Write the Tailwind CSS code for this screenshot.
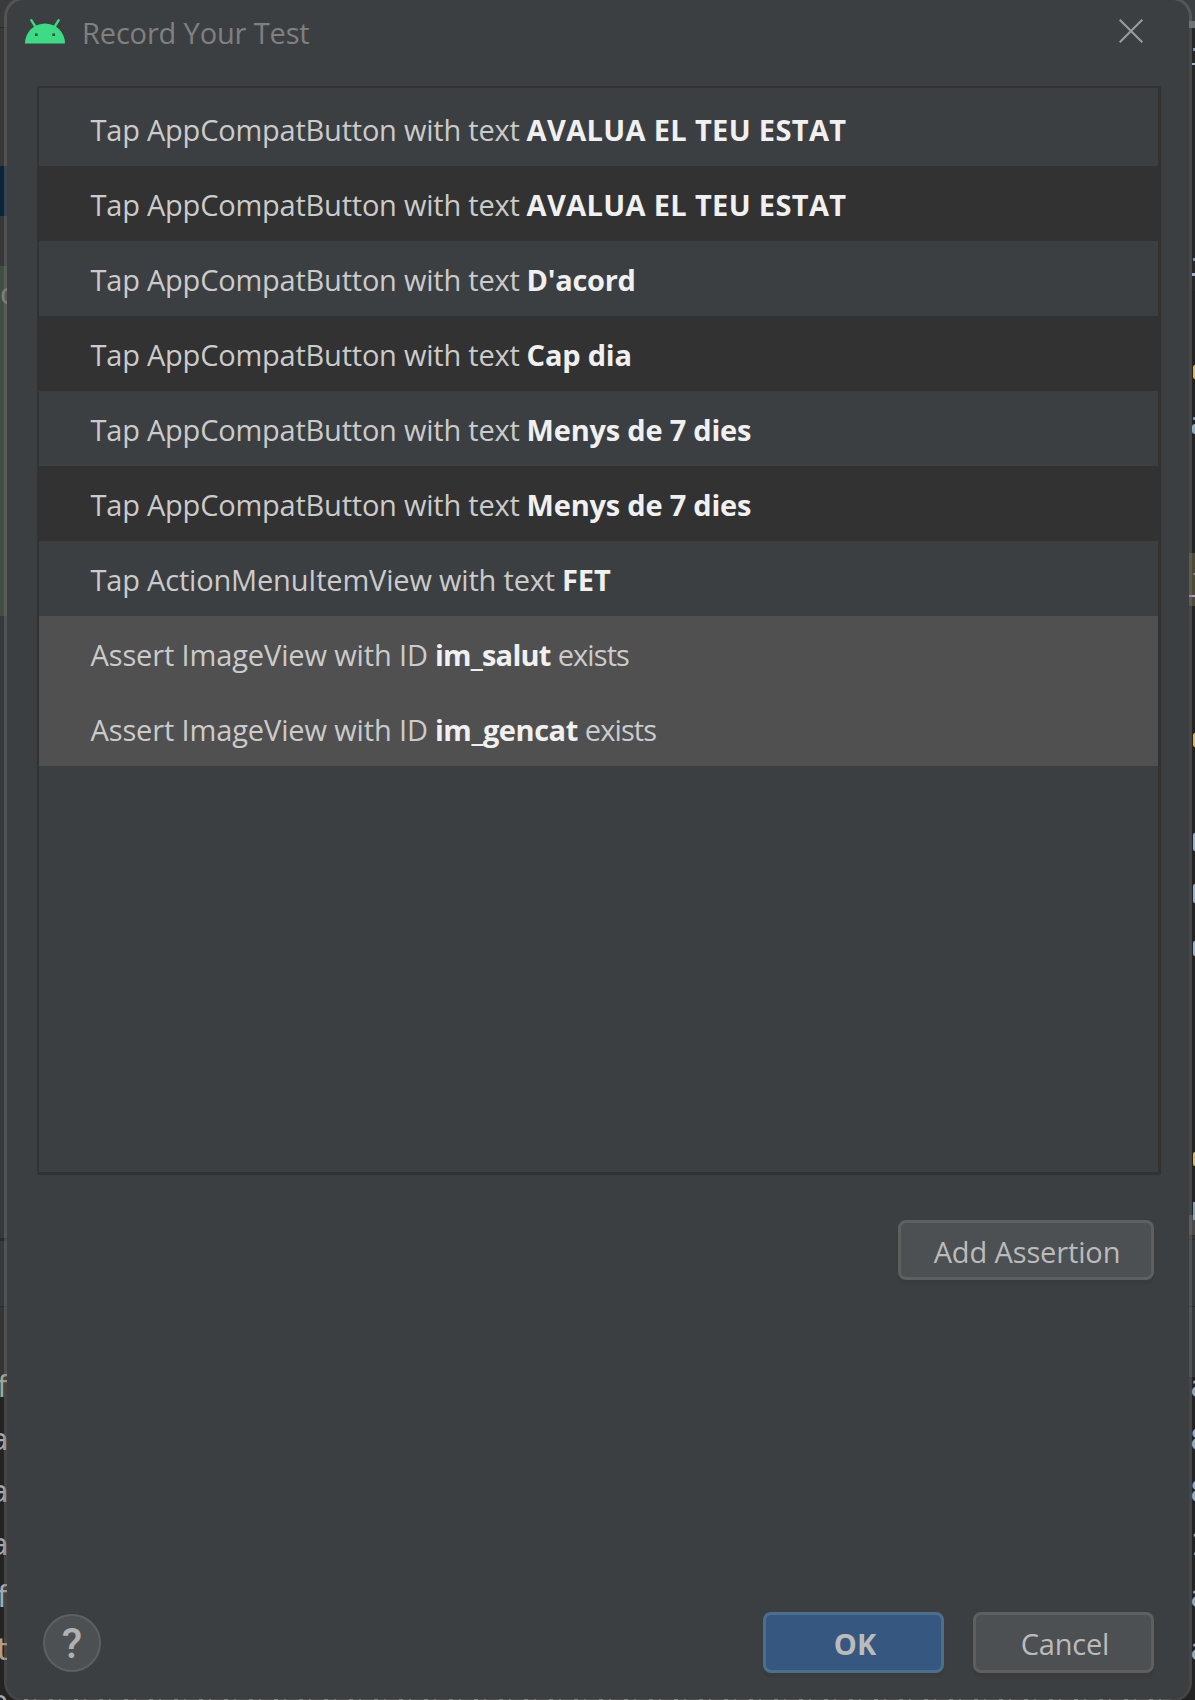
<!DOCTYPE html>
<html lang="en">
<head>
<meta charset="utf-8">
<title>Record Your Test</title>
<script src="https://cdn.jsdelivr.net/npm/@tailwindcss/browser@4"></script>
</head>
<body class="bg-[#232323]">
<div class="relative h-[1700px] w-[1195px] overflow-hidden font-['Open_Sans',sans-serif] text-[29px] leading-[40px]">

  <!-- IDE window behind the dialog -->
  <div class="absolute inset-0 flex justify-between bg-[#232323] font-['DejaVu_Sans_Mono',monospace] text-[31px] leading-[52.5px]" aria-hidden="true">
    <div class="flex w-[30px] flex-col [&>*]:shrink-0">
      <div class="h-7 border-b border-[#292929] bg-[#393b3c]"></div>
      <div class="h-[138px] bg-[#373839]"></div>
      <div class="h-[50px] bg-[#0b2438]"></div>
      <div class="h-[50px] bg-[#373839]"></div>
      <div class="h-[350px] bg-[#434d42] pt-px"><div class="text-[29px] font-['Open_Sans',sans-serif] text-[#808080]">c</div></div>
      <div class="h-[622px] bg-[#36393b]"></div>
      <div class="h-[3px] bg-[#2a2a2a]"></div>
      <div class="h-[66px] border-b border-[#2a2a2a] bg-[#36393b]"></div>
      <div class="h-[70px] border-b-2 border-[#2d2d2d] bg-[#343536]"></div>
      <div class="-ml-[10px] -mt-[17px] text-[#a9a9a9]">
        <div class="h-[52.5px] pl-[3px] text-[#a5a58c]">f</div>
        <div class="h-[52.5px]">a</div>
        <div class="h-[52.5px]">a</div>
        <div class="h-[52.5px]">a</div>
        <div class="h-[52.5px] pl-[3px]">f</div>
        <div class="h-[52.5px] pl-[3px] text-[#b0a08a]">t</div>
        <div class="h-[52.5px]">a</div>
      </div>
    </div>

    <div class="flex w-[30px] flex-col [&>*]:shrink-0">
      <div class="h-[21px] bg-[#3c3f41]"></div>
      <div class="h-[7px] bg-[#6b7175]"></div>
      <div class="flex h-[263px] flex-col items-end bg-[#262626]">
        <div class="mt-5 h-[3px] w-[2px] bg-[#6f95c8]"></div>
        <div class="mt-3 h-[2px] w-[3px] bg-[#9fb4d0]"></div>
        <div class="mt-[193px] h-[3px] w-[2px] bg-[#6f95c8]"></div>
        <div class="mt-3 h-[3px] w-[3px] bg-[#9fb4d0]"></div>
      </div>
      <div class="flex h-[262px] flex-col items-end">
        <div class="mt-[74px] h-[14px] w-[2px] rounded-l-full bg-[#e0b85c]"></div>
        <div class="mt-[38px] h-[3px] w-[2px] bg-[#6f95c8]"></div>
        <div class="mt-[4px] h-[10px] w-[3px] rounded-l-full bg-[#8fadc0]"></div>
      </div>
      <div class="flex h-[53px] flex-col items-end bg-[#4c4935]">
        <div class="mt-5 h-[2px] w-[2px] bg-[#8a6c95]"></div>
        <div class="mt-5 h-[2px] w-[6px] bg-[#b69cbe]"></div>
      </div>
      <div class="flex h-[609px] flex-col items-end [&>*]:shrink-0">
        <div class="mt-[127px] h-[14px] w-[2px] rounded-l-full bg-[#e0b85c]"></div>
        <div class="mt-[86px] h-[18px] w-[2px] rounded-l-full bg-[#8fb4d8]"></div>
        <div class="mt-[33px] h-[19px] w-[2px] rounded-l-full bg-[#8fb4d8]"></div>
        <div class="mt-[38px] h-[15px] w-[2px] rounded-l-full bg-[#8fb4d8]"></div>
        <div class="mt-[196px] h-[14px] w-[2px] rounded-l-full bg-[#e0b85c]"></div>
        <div class="mt-[36px] h-[13px] w-[2px] bg-[#82a0b4]"></div>
      </div>
      <div class="flex h-[20px] flex-col items-end bg-[#4a4a4a]"><div class="h-[5px] w-[2px] bg-[#91a6b4]"></div></div>
      <div class="h-[5px] border-y border-[#2a2a2a] bg-[#343434]"></div>
      <div class="h-[67px] border-b border-[#292929] bg-[#36393b]"></div>
      <div class="h-[70px] bg-[#36393b]"></div>
      <div class="-mt-[17px] pl-[25px] text-[#a0aab4]">
        <div class="h-[52.5px]">a</div>
        <div class="h-[52.5px]">8</div>
        <div class="h-[52.5px]">8</div>
        <div class="h-[52.5px]">1</div>
        <div class="h-[52.5px]">a</div>
        <div class="h-[52.5px]">a</div>
      </div>
    </div>
    <div class="absolute bottom-0 left-6 right-6 h-[3px] bg-[repeating-linear-gradient(90deg,#8f8d8c_0_4px,#3a3838_4px_10px,#7d7b7a_10px_12px,#3a3838_12px_25px)]"></div>
  </div>

  <!-- Dialog -->
  <div class="relative -mt-[3px] ml-1 mr-[3px] flex h-[1705px] flex-col rounded-[20px] border-[3px] border-[#787878]/40 bg-[#3c3f41] bg-clip-padding">
    <header class="flex h-[86px] items-start justify-between pl-[18px] pr-[46px]">
      <div class="flex">
        <svg class="mt-[18px] h-[26px] w-10" viewBox="0 0 40 26">
          <path d="M0 25.5a20 20 0 0 1 40 0z" fill="#3ddc84"/>
          <path d="M6.3 2.2l5 8M33.700 2.200l-5 8" stroke="#3ddc84" stroke-width="2.400" stroke-linecap="round"/>
          <path d="M10 15.500h2.600v2.600H10zM27.400 15.500H30v2.600h-2.600z" fill="#2c4a3b"/>
        </svg>
        <h1 class="ml-[17px] mt-[13px] tracking-[-0.15px] text-[#808080]">Record Your Test</h1>
      </div>
      <svg class="mt-[19px] h-6 w-6" viewBox="0 0 24 24"><path d="M.7.7l22.600 22.600M23.300.7L.7 23.300" stroke="#9a9b9c" stroke-width="2.100"/></svg>
    </header>

    <ul class="ml-[30px] mr-7 h-[1089px] border-t-2 border-l-2 border-r-[3px] border-b-[3px] border-[#323232] pt-[3px] text-[#cbcbcb] [&_b]:font-bold [&_b]:text-[#f0f0f0] [&>li]:flex [&>li]:h-[75px] [&>li]:items-center [&>li]:gap-[7px] [&>li]:pl-[51.5px] [&>li]:pt-[3px] [&>li]:whitespace-nowrap">
      <li><span class="tracking-[-0.22px]">Tap AppCompatButton with text</span><b class="tracking-[0.35px]">AVALUA EL TEU ESTAT</b></li>
      <li class="bg-[#323232]"><span class="tracking-[-0.22px]">Tap AppCompatButton with text</span><b class="tracking-[0.35px]">AVALUA EL TEU ESTAT</b></li>
      <li><span class="tracking-[-0.22px]">Tap AppCompatButton with text</span><b class="tracking-[-0.3px]">D'acord</b></li>
      <li class="bg-[#323232]"><span class="tracking-[-0.22px]">Tap AppCompatButton with text</span><b class="tracking-[-0.2px]">Cap dia</b></li>
      <li><span class="tracking-[-0.22px]">Tap AppCompatButton with text</span><b class="tracking-[-0.22px]">Menys de 7 dies</b></li>
      <li class="bg-[#323232]"><span class="tracking-[-0.22px]">Tap AppCompatButton with text</span><b class="tracking-[-0.22px]">Menys de 7 dies</b></li>
      <li><span class="tracking-[-0.19px]">Tap ActionMenuItemView with text</span><b>FET</b></li>
      <li class="bg-[#505050]"><span class="tracking-[-0.13px]">Assert ImageView with ID</span><b class="tracking-[-0.75px]">im_salut</b><span class="tracking-[-0.9px]">exists</span></li>
      <li class="bg-[#505050]"><span class="tracking-[-0.13px]">Assert ImageView with ID</span><b class="tracking-[-0.44px]">im_gencat</b><span class="tracking-[-0.9px]">exists</span></li>
    </ul>

    <div class="mt-[45px] flex justify-end pr-[35px]">
      <button class="h-[60px] w-[256px] rounded-lg border-[3px] border-[#5e6060] bg-[#4c5052] pl-[2px] pt-[3px] tracking-[-0.13px] text-[#bbbbbb] shadow-[0_4px_1px_#393b3d]">Add Assertion</button>
    </div>

    <footer class="mt-auto flex items-center justify-between pb-[26px] pl-9 pr-[35px]">
      <button class="flex size-[58px] items-center justify-center rounded-full border-2 border-[#5e6060] bg-[#4c5052] pt-[2px] font-['Roboto',sans-serif] text-[42px] font-medium text-[#afb1b3]">?</button>
      <div class="flex gap-[29px]">
        <button class="h-[61px] w-[181px] rounded-lg border-[3px] border-[#4c708c] bg-[#365880] pl-[3px] pt-[2px] font-bold text-[#bbbbbb] shadow-[0_4px_1px_#393b3d]">OK</button>
        <button class="h-[61px] w-[181px] rounded-lg border-[3px] border-[#5e6060] bg-[#4c5052] pl-[3px] pt-[2px] tracking-[-0.2px] text-[#bbbbbb] shadow-[0_4px_1px_#393b3d]">Cancel</button>
      </div>
    </footer>
  </div>
</div>
</body>
</html>
